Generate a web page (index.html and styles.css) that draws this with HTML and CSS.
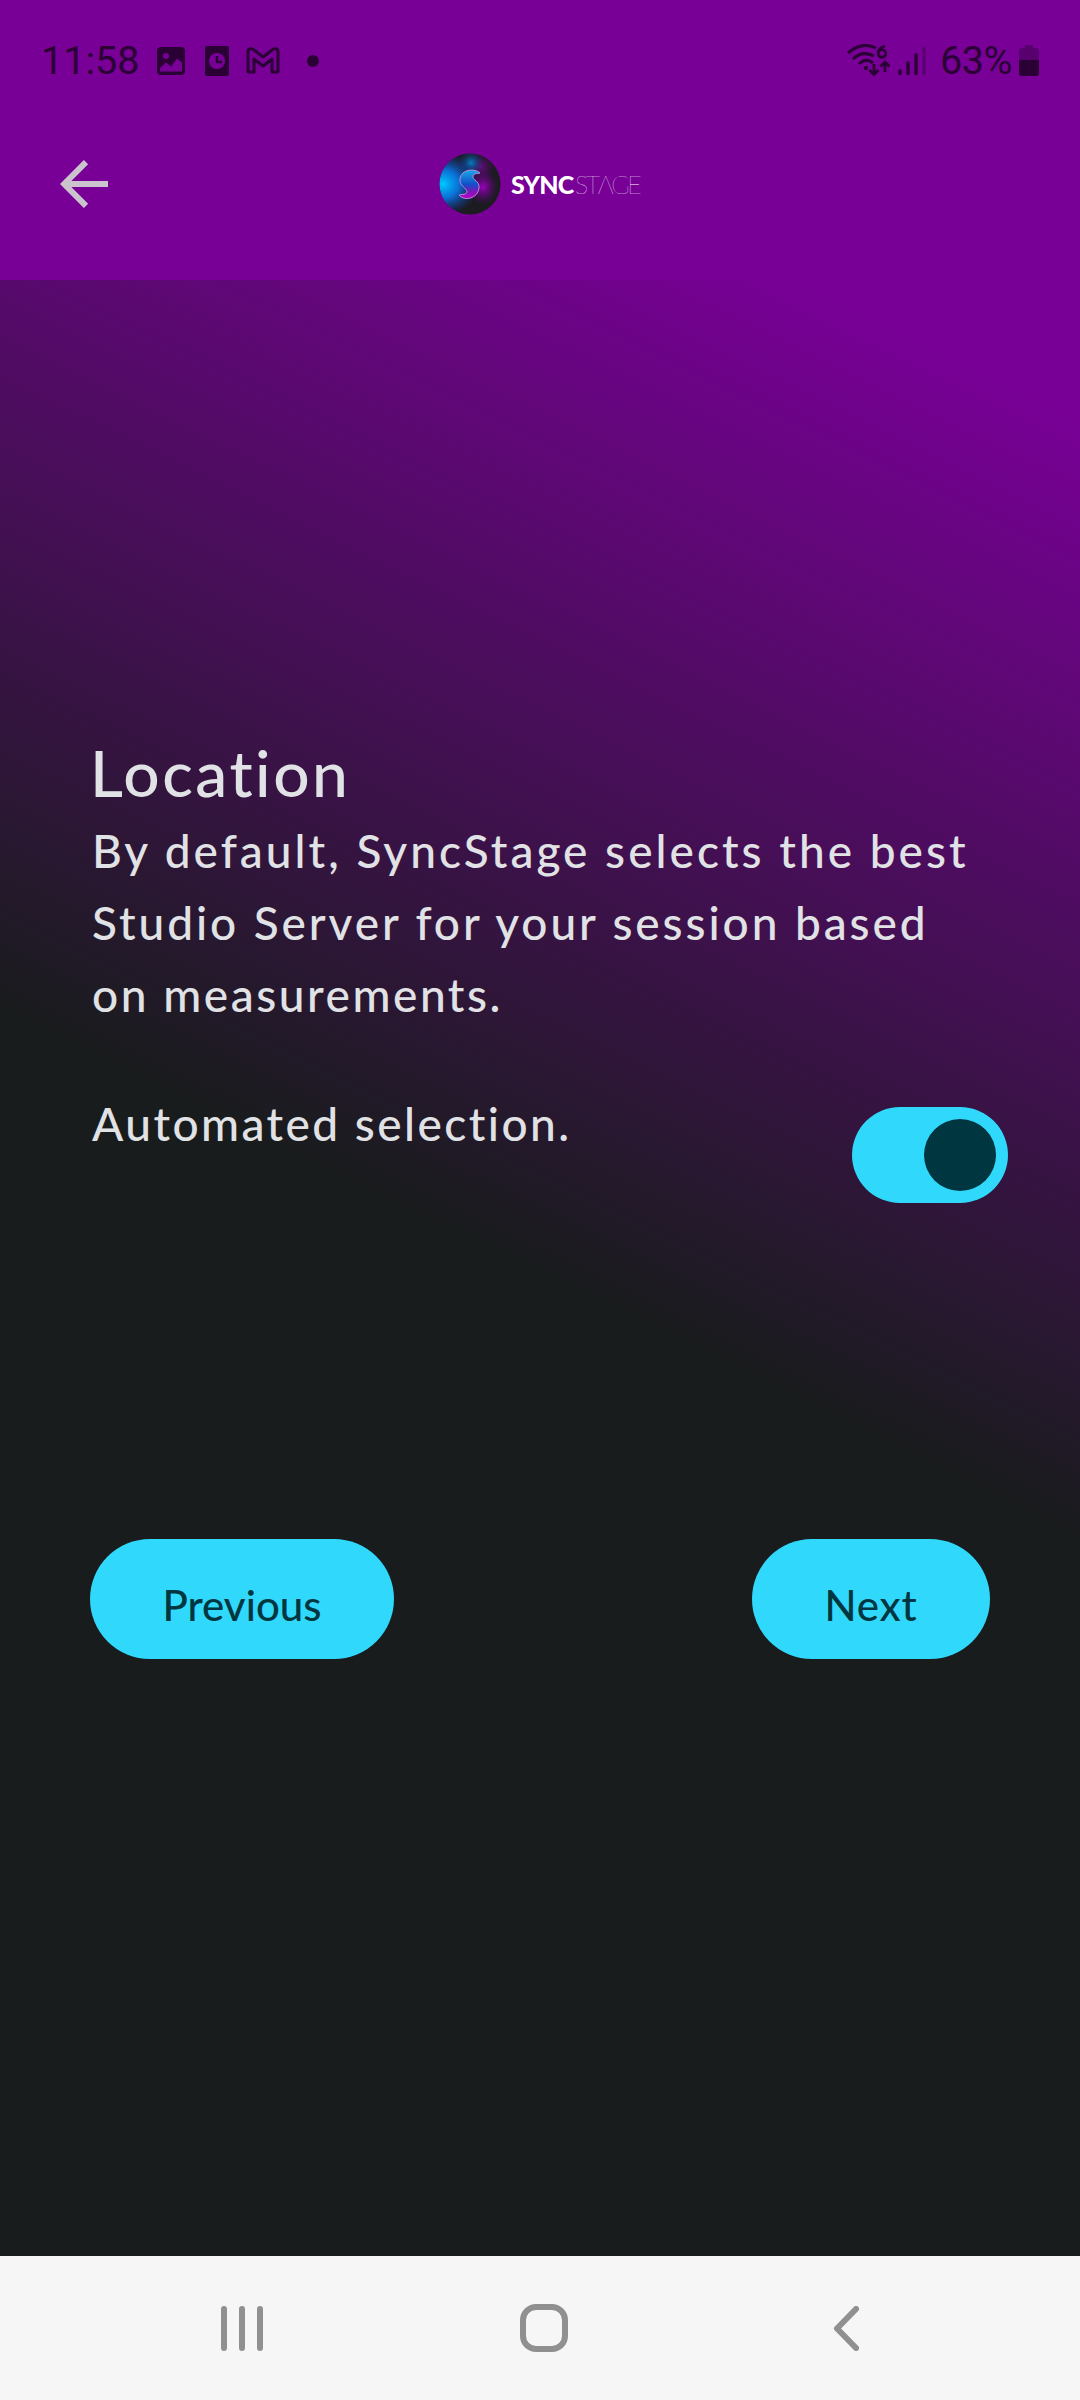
FILE: index.html
```html
<!DOCTYPE html>
<html lang="en">
<head>
<meta charset="utf-8">
<title>SyncStage</title>
<link rel="stylesheet" href="styles.css">
</head>
<body>
<div class="screen">
  <header class="top">
    <div class="status">
      <span class="time">11:58</span>
      <svg class="ic-photo" width="28" height="28" viewBox="0 0 28 28"><path fill-rule="evenodd" d="M4 0h20a4 4 0 0 1 4 4v20a4 4 0 0 1-4 4H4a4 4 0 0 1-4-4V4a4 4 0 0 1 4-4zM9 6a3 3 0 1 0 0 6a3 3 0 0 0 0-6zM3 21v3.500h22v-9l-5-4-6 8-5-4z"/></svg>
      <svg class="ic-clock" width="24" height="30" viewBox="0 0 24 30"><rect width="24" height="30" rx="2"/><circle cx="12" cy="15" r="8" fill="#780096"/><path d="M12 10v6h5" fill="none" stroke="#2a0035" stroke-width="2.500"/></svg>
      <svg class="ic-mail" width="34" height="27" viewBox="0 0 34 27"><path d="M2 24V5C2 1 6 1 8 3l9 7 9-7c2-2 6-2 6 2v19q0 1-1 1h-5V12l-9 7-9-7v13H3q-1 0-1-1z" fill="none" stroke="#2a0035" stroke-width="3" stroke-linejoin="round"/></svg>
      <span class="dot"></span>
      <svg class="ic-wifi" width="44" height="34" viewBox="0 0 44 34"><g fill="none" stroke="#2a0035" stroke-width="3"><path d="M1 9Q15-3 29 4M6 15Q15 6 27 12M12 20Q19 13 26 19"/><path d="M27 20v10M22.500 26l4.500 4.500 4.500-4.500M38 28V19M33.500 22.500l4.500-4.500 4.500 4.500" stroke-width="2.800"/><circle cx="35" cy="9.500" r="3.800" stroke-width="2.800"/><path d="M31.200 9Q31 4 38 2" stroke-width="2.800"/></g><circle cx="19" cy="24" r="2.200"/></svg>
      <svg class="ic-signal" width="28" height="30" viewBox="0 0 28 30"><g stroke="#2a0035" stroke-width="3.400" stroke-linecap="round"><path d="M2 25v2.500M10 17v10.500M18 9v18.500"/><path d="M26 2v25.500" opacity=".35"/></g></svg>
      <span class="percent">63%</span>
      <svg class="ic-battery" width="20" height="31" viewBox="0 0 20 31"><path opacity=".4" d="M6 0h8v3h3q3 0 3 3v9H0V6q0-3 3-3h3z"/><path d="M0 15h20v13q0 3-3 3H3q-3 0-3-3z"/></svg>
    </div>
    <div class="bar">
      <svg class="back" width="48" height="48" viewBox="0 0 48 48"><path d="M48 24H6M26 2.100L4.200 24L26 45.900" fill="none" stroke="#cbc4cf" stroke-width="6"/></svg>
      <div class="brand">
        <svg width="62" height="62" viewBox="0 0 62 62">
          <defs>
            <clipPath id="disc"><circle cx="31" cy="31" r="30.500"/></clipPath>
            <radialGradient id="blue"><stop offset="0" stop-color="#00c8ff"/><stop offset=".45" stop-color="#0878e8" stop-opacity=".9"/><stop offset="1" stop-color="#1038b0" stop-opacity="0"/></radialGradient>
            <radialGradient id="teal"><stop offset="0" stop-color="#087dc0"/><stop offset="1" stop-color="#103080" stop-opacity="0"/></radialGradient>
            <radialGradient id="violet"><stop offset="0" stop-color="#9c00bc"/><stop offset="1" stop-color="#5a0080" stop-opacity="0"/></radialGradient>
            <linearGradient id="ess" x2="0" y2="1"><stop offset="0" stop-color="#18a8e8"/><stop offset=".5" stop-color="#1050c8"/><stop offset=".75" stop-color="#7a18b8"/><stop offset="1" stop-color="#c000c8"/></linearGradient>
          </defs>
          <g clip-path="url(#disc)">
            <rect width="62" height="62" fill="#1c1b20"/>
            <circle cx="42" cy="14" r="14" fill="url(#violet)" opacity=".6"/>
            <circle cx="32" cy="10" r="13" fill="url(#teal)"/>
            <ellipse cx="4" cy="31" rx="36" ry="32" fill="url(#blue)"/>
            <ellipse cx="44" cy="34" rx="15" ry="18" fill="url(#violet)"/>
          </g>
          <path d="M41 20C36 15 22 16 21 26C20 33 28 35 28 39C27 42 24 41 20 42C26 49 39 45 40 35C41 28 33 27 34 23C35 20 38 21 41 20Z" fill="url(#ess)" stroke="#b98cdd" stroke-width="1"/>
        </svg>
        <span class="sync">SYNC</span><span class="stage">STΛGE</span>
      </div>
    </div>
  </header>
  <main class="content">
    <h1>Location</h1>
    <p class="copy"><span class="l1">By default, SyncStage selects the best</span><br><span class="l2">Studio Server for your session based</span><br><span class="l3">on measurements.</span></p>
    <div class="option">
      <span class="label">Automated selection.</span>
      <span class="switch"><span class="thumb"></span></span>
    </div>
    <div class="actions">
      <button class="btn prev">Previous</button>
      <button class="btn next">Next</button>
    </div>
  </main>
  <nav class="nav">
    <svg width="42" height="45" viewBox="0 0 42 45"><path d="M3 3v39M21 3v39M39 3v39" class="ln"/></svg>
    <svg class="home" width="48" height="48" viewBox="0 0 48 48"><rect x="3" y="3" width="42" height="42" rx="13" class="ln"/></svg>
    <svg width="26" height="45" viewBox="0 0 26 45"><path d="M23 3L4 22.500L23 42" class="ln"/></svg>
  </nav>
</div>
</body>
</html>
```
FILE: styles.css
```css
* { box-sizing: border-box; }
body { margin: 0; background: #191c1d; }
svg { display: block; flex: none; }
.screen { width: 1080px; height: 2400px; display: flex; flex-direction: column; font-family: Lato, sans-serif; overflow: hidden; }
.top { height: 280px; flex: none; background: #780096; }
.status { height: 121px; padding: 0 41px 0 41px; display: flex; align-items: center; font-family: Roboto, sans-serif; font-weight: 400; font-size: 39.500px; color: #2a0035; fill: #2a0035; }
.time { width: 116px; }
.ic-photo { margin-right: 20px; }
.ic-clock { margin-right: 17px; }
.ic-mail { margin-right: 27px; }
.dot { width: 12px; height: 12px; border-radius: 50%; background: #2a0035; margin-right: auto; }
.ic-wifi { margin-right: 7px; }
.ic-signal { margin-right: 14px; }
.percent { width: 79px; letter-spacing: -0.5px; white-space: nowrap; }
.bar { height: 159px; display: grid; grid-template-columns: 379px 1fr; align-items: start; padding: 31px 0 0 60px; }
.back { margin-top: 8px; }
.brand { display: flex; align-items: center; color: #fff; font-size: 25px; line-height: 64px; }
.sync { font-weight: 900; margin-left: 10px; width: 64px; letter-spacing: -0.8px; }
.stage { font-weight: 100; letter-spacing: -2.4px; }
.content { height: 1976px; flex: none; padding: 451px 90px 0; color: #e1e2e5; background: linear-gradient(206deg, #780096 122px, #191c1d 1130px); }
h1 { margin: 0; font-size: 64px; font-weight: 500; line-height: 84px; letter-spacing: 2.500px; }
.copy { margin: 0 0 57px; font-size: 46px; font-weight: 500; line-height: 72px; white-space: nowrap; padding-left: 2px; }
.l1 { letter-spacing: 3.020px; }
.l2 { letter-spacing: 2.930px; }
.l3 { letter-spacing: 2.550px; }
.option { display: flex; justify-content: space-between; height: 115px; margin-right: -18px; padding-left: 2px; }
.label { font-size: 46px; font-weight: 500; line-height: 72px; letter-spacing: 2.450px; }
.switch { width: 156px; height: 96px; margin-top: 19px; padding: 12px; border-radius: 48px; background: #30d9fb; display: flex; justify-content: flex-end; }
.thumb { width: 72px; height: 72px; border-radius: 50%; background: #00363f; }
.actions { margin-top: 336px; display: flex; justify-content: space-between; }
.btn { height: 120px; border: 0; padding: 0; border-radius: 60px; background: #30d9fb; color: #00363f; font-family: Lato, sans-serif; font-size: 42px; font-weight: 500; line-height: 132px; }
.prev { width: 304px; }
.next { width: 238px; letter-spacing: 0.800px; }
.nav { height: 144px; flex: none; background: #f6f6f6; display: flex; justify-content: space-between; align-items: center; padding: 0 221px; }
.home { margin-right: 8px; }
.ln { fill: none; stroke: #909090; stroke-width: 6; stroke-linecap: round; stroke-linejoin: round; }
```
